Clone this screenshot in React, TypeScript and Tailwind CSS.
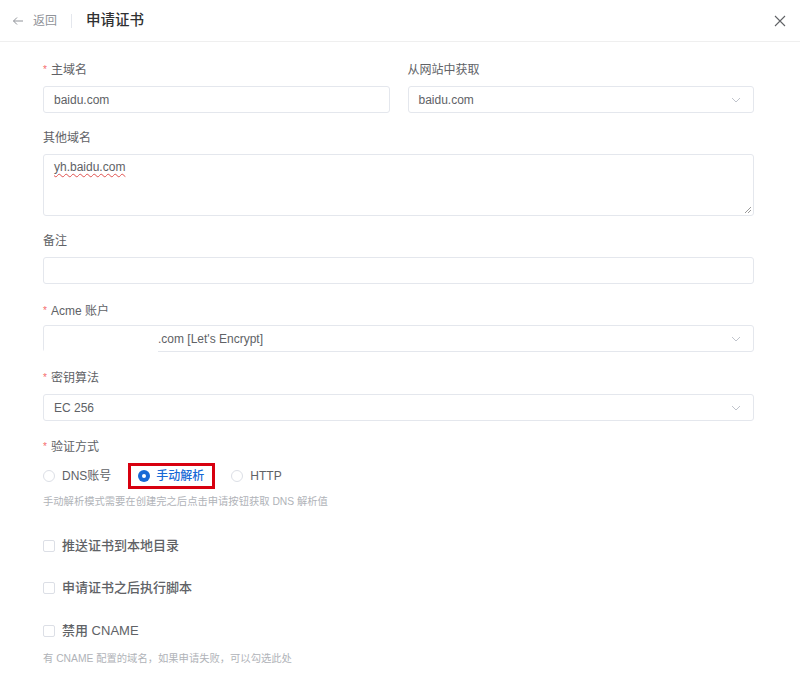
import React from "react";

const font = { fontFamily: '"Liberation Sans", "Noto Sans CJK SC", sans-serif' };

function Chevron() {
  return (
    <svg width="10" height="6" viewBox="0 0 10 6" className="shrink-0">
      <path d="M1 1 L5 5 L9 1" fill="none" stroke="#c0c4cc" strokeWidth="1" />
    </svg>
  );
}

function Label({ text, required, tight }: { text: string; required?: boolean; tight?: boolean }) {
  return (
    <div className={"h-[16px] flex items-center text-[12px] text-[#606266] leading-[16px] " + (tight ? "mb-[6px]" : "mb-[8px]")}>
      {required && <span className="text-[#f56c6c] mr-[4px] text-[10px]">*</span>}
      {text}
    </div>
  );
}

function Input({ value, select }: { value?: string; select?: boolean }) {
  return (
    <div className="h-[27px] border border-[#e4e7ed] rounded-[3px] bg-white flex items-center pl-[10px] pr-[12px] text-[12px] text-[#606266]">
      <span className="flex-1">{value}</span>
      {select && <Chevron />}
    </div>
  );
}

function Checkbox({ label }: { label: string }) {
  return (
    <div className="flex items-center h-[16px]">
      <span className="w-[12px] h-[12px] border border-[#dcdfe6] rounded-[2px] bg-white mr-[7px]" />
      <span className="text-[13px] text-[#606266] font-medium">{label}</span>
    </div>
  );
}

function Radio({ label, checked }: { label: string; checked?: boolean }) {
  return (
    <div className="flex items-center">
      {checked ? (
        <span className="w-[12px] h-[12px] rounded-full bg-[#1769d6] flex items-center justify-center mr-[6px]">
          <span className="w-[4px] h-[4px] rounded-full bg-white" />
        </span>
      ) : (
        <span className="w-[12px] h-[12px] rounded-full border border-[#dcdfe6] bg-white mr-[7px]" />
      )}
      <span className={"text-[12px] " + (checked ? "text-[#1769d6] font-medium" : "text-[#606266]")}>
        {label}
      </span>
    </div>
  );
}

export default function App() {
  return (
    <div className="w-[800px] h-[683px] bg-white overflow-hidden" style={font}>
      {/* Header */}
      <div className="h-[42px] border-b border-[#efefef] flex items-center pl-[12px] pr-[14px]">
        <svg width="12" height="10" viewBox="0 0 12 10" className="mr-[9px]">
          <path d="M11 5 H1.5 M5 1.5 L1.5 5 L5 8.5" fill="none" stroke="#909399" strokeWidth="1" />
        </svg>
        <span className="text-[12px] text-[#909399]">返回</span>
        <span className="w-px h-[14px] bg-[#e4e7ed] mx-[14px]" />
        <span className="text-[14.5px] text-[#303133] font-medium">申请证书</span>
        <span className="flex-1" />
        <svg width="12" height="12" viewBox="0 0 12 12">
          <path d="M1 1 L11 11 M11 1 L1 11" fill="none" stroke="#606266" strokeWidth="1.1" />
        </svg>
      </div>

      {/* Form */}
      <div className="pl-[43px] pr-[46px] pt-[20px]">
        <div className="grid grid-cols-2 gap-x-[18px]">
          <div>
            <Label text="主域名" required />
            <Input value="baidu.com" />
          </div>
          <div>
            <Label text="从网站中获取" />
            <Input value="baidu.com" select />
          </div>
        </div>

        <div className="mt-[17px]">
          <Label text="其他域名" />
          <div className="relative h-[62px] border border-[#e4e7ed] rounded-[3px] bg-white px-[10px] pt-[3px] text-[12px] text-[#606266]">
            <span className="underline decoration-wavy decoration-[#e0524f] decoration-[1px] underline-offset-[2px]">
              yh.baidu.com
            </span>
            <svg width="8" height="8" viewBox="0 0 8 8" className="absolute right-[1px] bottom-[1px]">
              <path d="M7 1 L1 7 M7 4 L4 7" stroke="#9a9a9a" strokeWidth="1" />
            </svg>
          </div>
        </div>

        <div className="mt-[17px]">
          <Label text="备注" />
          <Input />
        </div>

        <div className="mt-[19px]">
          <Label text="Acme 账户" required tight />
          <div className="relative">
            <div className="h-[27px] border border-[#e4e7ed] rounded-[3px] bg-white flex items-center pl-[114px] pr-[12px] text-[12px] text-[#606266]">
              <span className="flex-1">.com [Let's Encrypt]</span>
              <Chevron />
            </div>
            <div className="absolute left-[1px] top-[14px] w-[114px] h-[14px] bg-white" />
          </div>
        </div>

        <div className="mt-[18px]">
          <Label text="密钥算法" required />
          <Input value="EC 256" select />
        </div>

        <div className="mt-[18px]">
          <Label text="验证方式" required />
          <div className="flex items-center h-[26px]">
            <Radio label="DNS账号" />
            <div className="ml-[17px] h-[26px] border-[3px] border-[#d7000f] pl-[7px] pr-[8px] flex items-center">
              <Radio label="手动解析" checked />
            </div>
            <div className="ml-[16px]">
              <Radio label="HTTP" />
            </div>
          </div>
          <div className="mt-[6px] text-[10.3px] text-[#b0b3b8] leading-[14px]">
            手动解析模式需要在创建完之后点击申请按钮获取 DNS 解析值
          </div>
        </div>

        <div className="mt-[29px]">
          <Checkbox label="推送证书到本地目录" />
        </div>
        <div className="mt-[26px]">
          <Checkbox label="申请证书之后执行脚本" />
        </div>
        <div className="mt-[27px]">
          <Checkbox label="禁用 CNAME" />
          <div className="mt-[13px] text-[10.3px] text-[#b0b3b8] leading-[14px]">
            有 CNAME 配置的域名，如果申请失败，可以勾选此处
          </div>
        </div>
      </div>
    </div>
  );
}
